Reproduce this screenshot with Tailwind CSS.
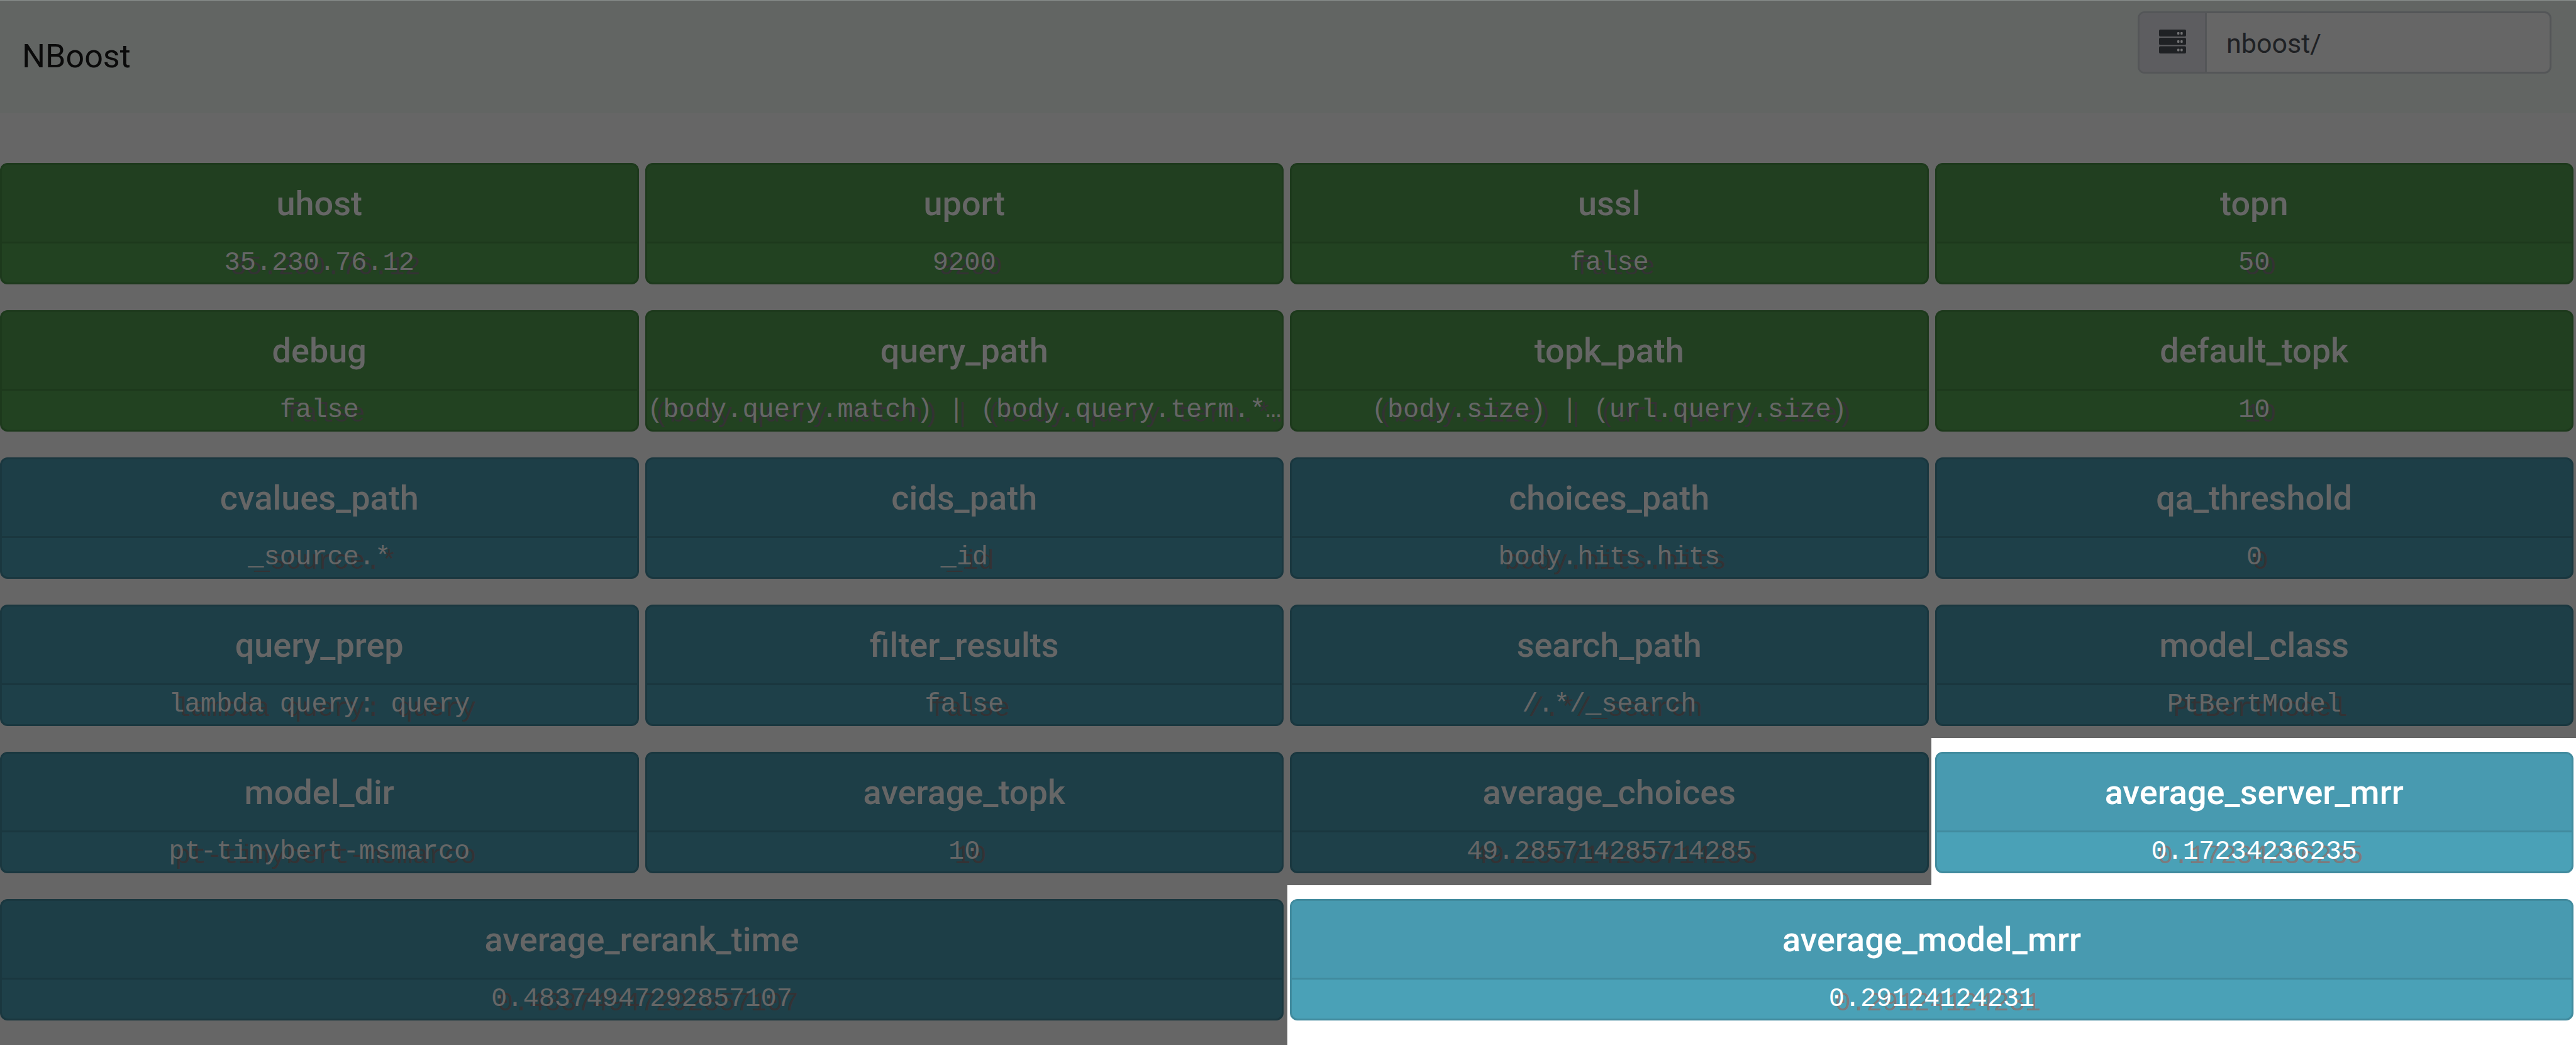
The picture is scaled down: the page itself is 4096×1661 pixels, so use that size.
<!DOCTYPE html>
<html lang="en">
<head>
<meta charset="utf-8">
<title>NBoost</title>
<script src="https://cdn.jsdelivr.net/npm/@tailwindcss/browser@4"></script>
</head>
<body class="flex min-h-screen flex-col bg-[#666666] font-[Roboto,Inter,sans-serif]">
<header class="flex h-[180px] items-start justify-between border-t border-[#8b908e] bg-[#626563] pr-[39px] pl-[35px]">
  <a href="#" class="mt-14 text-[52px] leading-[66px] text-[#0a0a0a]">NBoost</a>
  <div class="mt-[17px] flex h-[99px] w-[658px] overflow-hidden rounded-[11px] border-[3px] border-[#545658] bg-[#666666]">
    <label for="path" aria-label="Server path" class="flex w-[107px] shrink-0 items-center justify-center border-r-[3px] border-[#545658] bg-[#5d5d60] pb-[3px]">
      <svg class="h-[38px] w-[43px]" viewBox="0 0 43 38" aria-hidden="true">
        <g fill="#1f2124"><rect width="43" height="11" rx="2"/><rect y="13" width="43" height="11.5" rx="2"/><rect y="26.5" width="43" height="11.5" rx="2"/></g>
        <g fill="#737375"><rect x="29" y="4" width="3.4" height="4" rx="1"/><rect x="34.2" y="4" width="3.4" height="4" rx="1"/><rect x="29" y="17" width="3.4" height="4" rx="1"/><rect x="34.2" y="17" width="3.4" height="4" rx="1"/><rect x="29" y="30.5" width="3.4" height="4" rx="1"/><rect x="34.2" y="30.5" width="3.4" height="4" rx="1"/></g>
      </svg>
    </label>
    <input id="path" type="text" value="nboost/" class="min-w-0 flex-1 pt-1 pl-[31px] text-[43px] text-[#1f2124] outline-none">
  </div>
</header>
<main class="mt-[57px] grid flex-1 auto-rows-[234px] grid-cols-4 gap-x-[10px] pr-1 text-center text-[#666666] [&_article]:h-[193px] [&_article]:overflow-hidden [&_article]:rounded-[12px] [&_article]:border-[3px] [&_h2]:h-[125px] [&_h2]:border-b-[3px] [&_h2]:border-inherit [&_h2]:text-[54px] [&_h2]:leading-[124px] [&_h2]:font-medium [&_p]:font-['Liberation_Mono',monospace] [&_p]:text-[42px] [&_p]:leading-[62px] [&_p]:whitespace-nowrap [&_p]:text-shadow-[10px_7px_0_#343234] [&>*]:pt-[22px]">
  <div><article class="border-[#1d391c] bg-[#224221]"><h2 class="bg-[#213f20]">uhost</h2><p>35.230.76.12</p></article></div>
  <div><article class="border-[#1d391c] bg-[#224221]"><h2 class="bg-[#213f20]">uport</h2><p>9200</p></article></div>
  <div><article class="border-[#1d391c] bg-[#224221]"><h2 class="bg-[#213f20]">ussl</h2><p>false</p></article></div>
  <div><article class="border-[#1d391c] bg-[#224221]"><h2 class="bg-[#213f20]">topn</h2><p>50</p></article></div>

  <div><article class="border-[#1d391c] bg-[#224221]"><h2 class="bg-[#213f20]">debug</h2><p>false</p></article></div>
  <div><article class="border-[#1d391c] bg-[#224221]"><h2 class="bg-[#213f20]">query_path</h2><p>(body.query.match) | (body.query.term.*…</p></article></div>
  <div><article class="border-[#1d391c] bg-[#224221]"><h2 class="bg-[#213f20]">topk_path</h2><p>(body.size) | (url.query.size)</p></article></div>
  <div><article class="border-[#1d391c] bg-[#224221]"><h2 class="bg-[#213f20]">default_topk</h2><p>10</p></article></div>

  <div><article class="border-[#1a373f] bg-[#1e4049]"><h2 class="bg-[#1d3e47]">cvalues_path</h2><p>_source.*</p></article></div>
  <div><article class="border-[#1a373f] bg-[#1e4049]"><h2 class="bg-[#1d3e47]">cids_path</h2><p>_id</p></article></div>
  <div><article class="border-[#1a373f] bg-[#1e4049]"><h2 class="bg-[#1d3e47]">choices_path</h2><p>body.hits.hits</p></article></div>
  <div><article class="border-[#1a373f] bg-[#1e4049]"><h2 class="bg-[#1d3e47]">qa_threshold</h2><p>0</p></article></div>

  <div><article class="border-[#1a373f] bg-[#1e4049]"><h2 class="bg-[#1d3e47]">query_prep</h2><p>lambda query: query</p></article></div>
  <div><article class="border-[#1a373f] bg-[#1e4049]"><h2 class="bg-[#1d3e47]">filter_results</h2><p>false</p></article></div>
  <div><article class="border-[#1a373f] bg-[#1e4049]"><h2 class="bg-[#1d3e47]">search_path</h2><p>/.*/_search</p></article></div>
  <div><article class="border-[#1a373f] bg-[#1e4049]"><h2 class="bg-[#1d3e47]">model_class</h2><p>PtBertModel</p></article></div>

  <div><article class="border-[#1a373f] bg-[#1e4049]"><h2 class="bg-[#1d3e47]">model_dir</h2><p>pt-tinybert-msmarco</p></article></div>
  <div><article class="border-[#1a373f] bg-[#1e4049]"><h2 class="bg-[#1d3e47]">average_topk</h2><p>10</p></article></div>
  <div><article class="border-[#1a373f] bg-[#1e4049]"><h2 class="bg-[#1d3e47]">average_choices</h2><p>49.285714285714285</p></article></div>
  <div class="-mr-1 -ml-1.5 bg-white pr-1 pl-1.5 text-white"><article class="border-[#418b9e] bg-[#4aa1b7]"><h2 class="bg-[#489ab0]">average_server_mrr</h2><p class="text-shadow-[10px_7px_0_#7d7a7c]!">0.17234236235</p></article></div>

  <div class="col-span-2"><article class="border-[#1a373f] bg-[#1e4049]"><h2 class="bg-[#1d3e47]">average_rerank_time</h2><p>0.48374947292857107</p></article></div>
  <div class="col-span-2 -mr-1 -mb-5 -ml-1 bg-white px-1 text-white"><article class="border-[#418b9e] bg-[#4aa1b7]"><h2 class="bg-[#489ab0]">average_model_mrr</h2><p class="text-shadow-[10px_7px_0_#7d7a7c]!">0.29124124231</p></article></div>
</main>
</body>
</html>
